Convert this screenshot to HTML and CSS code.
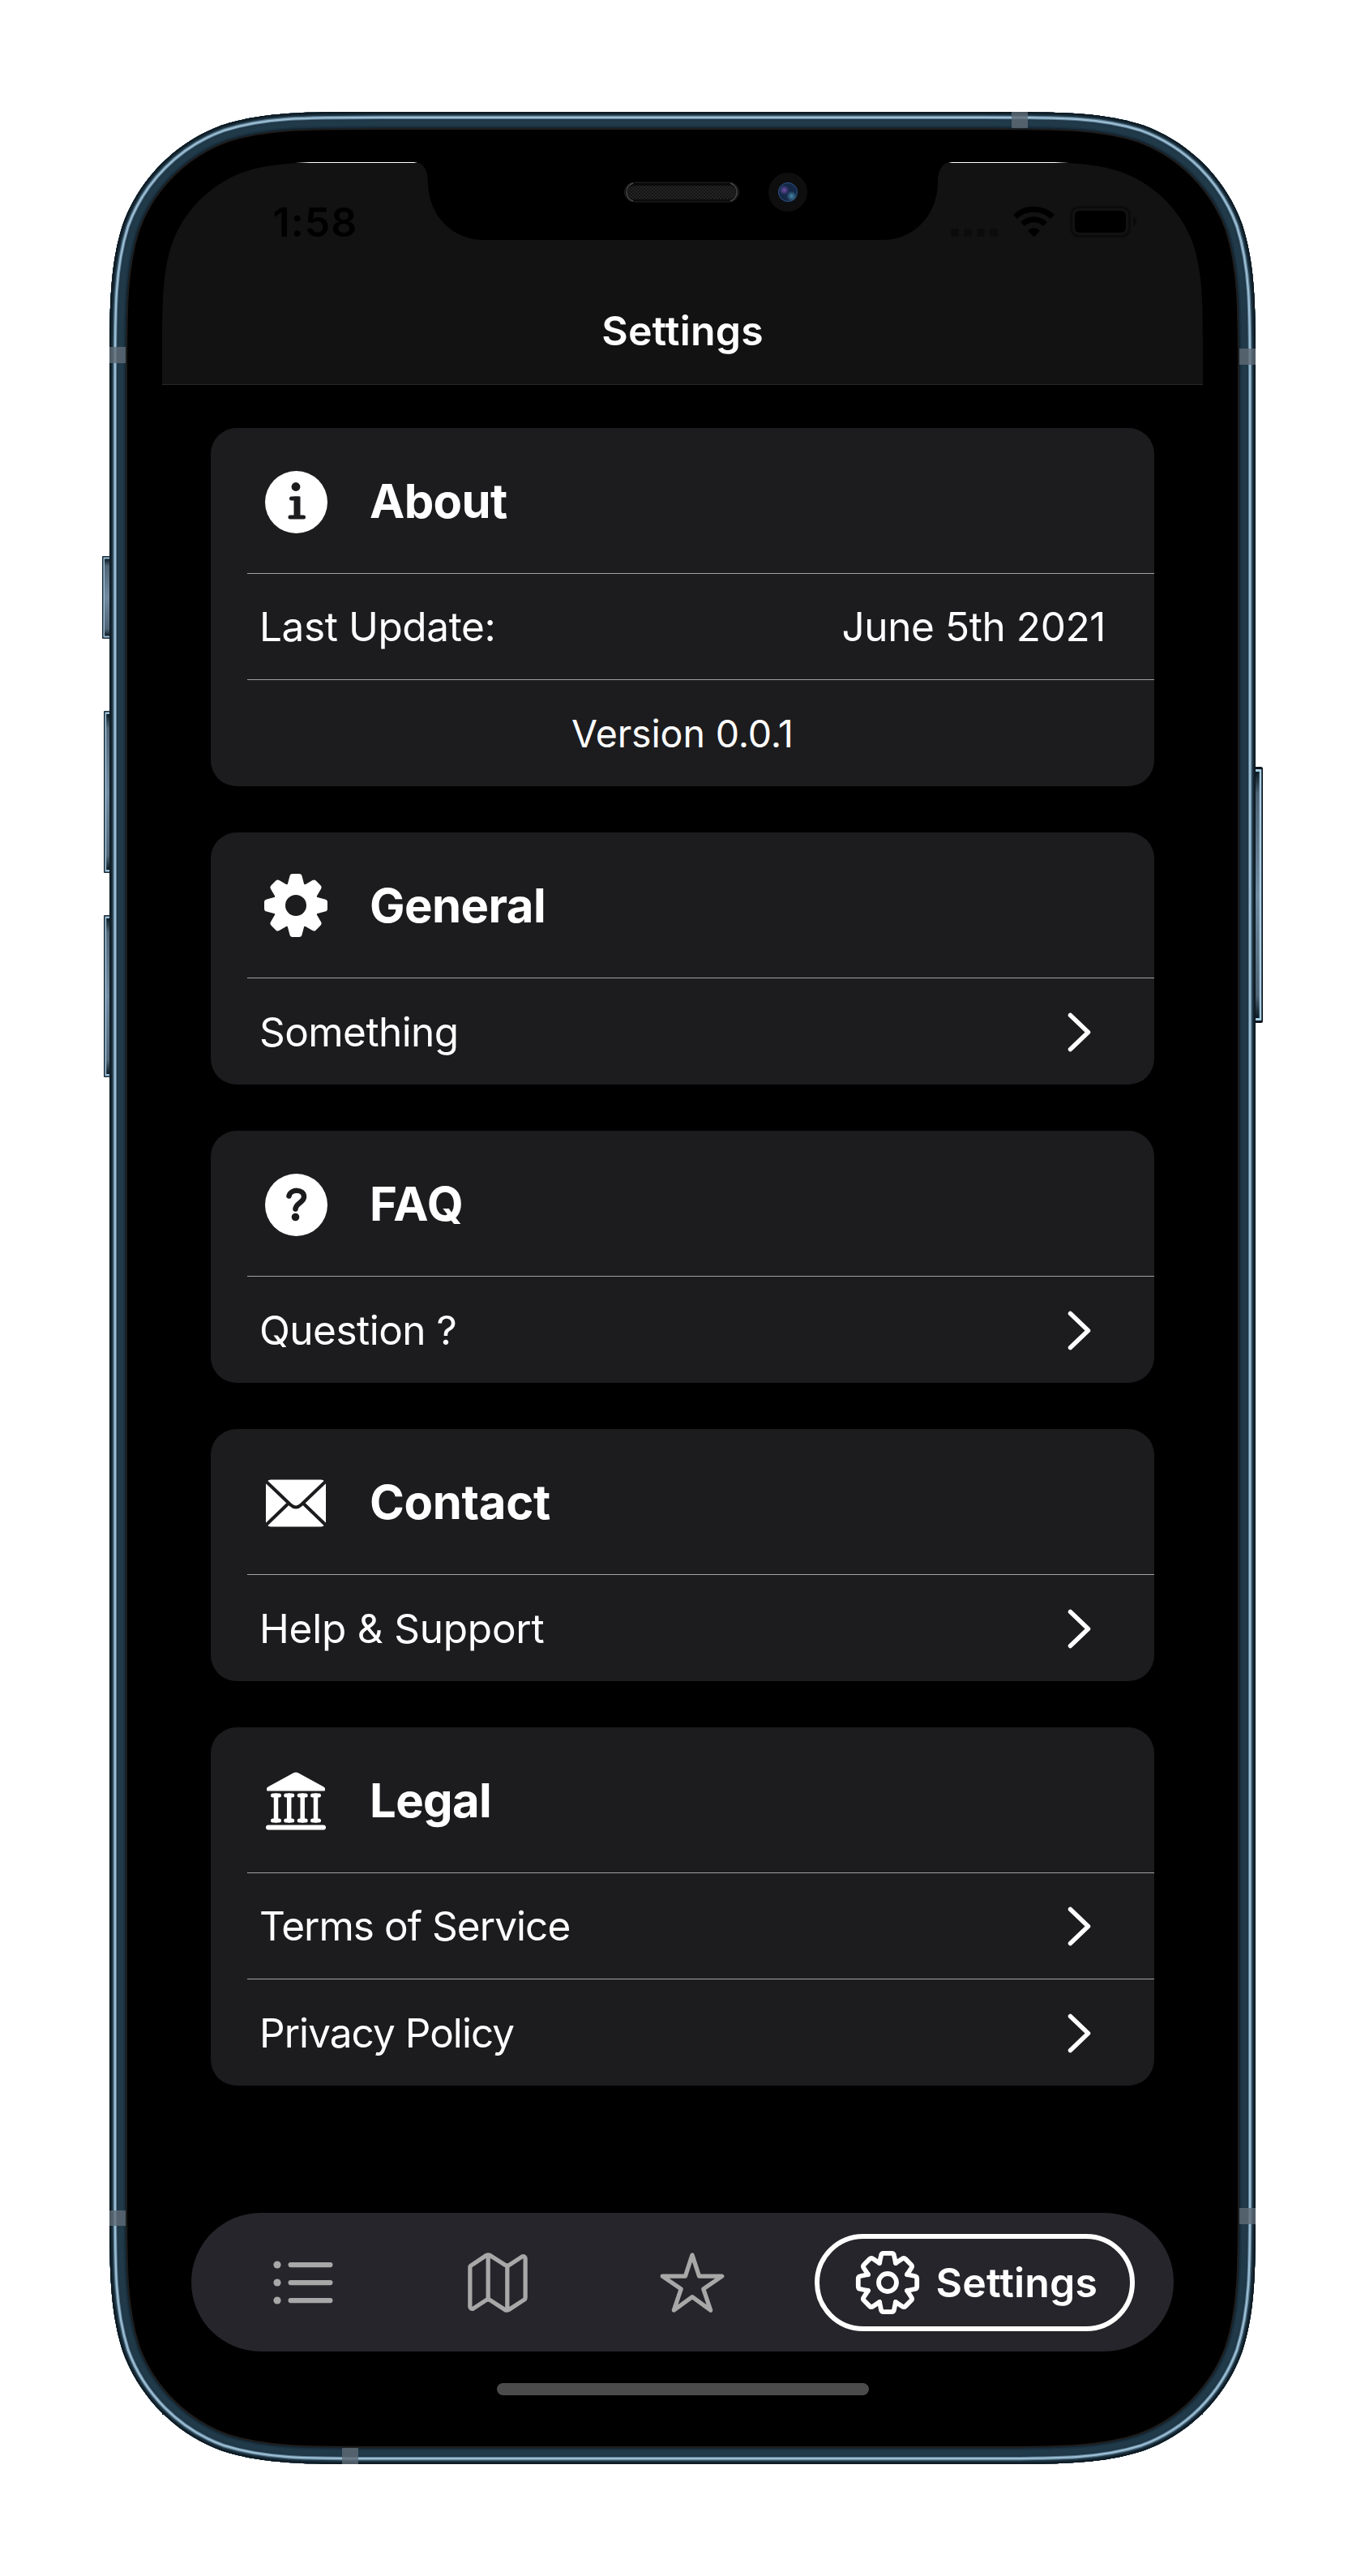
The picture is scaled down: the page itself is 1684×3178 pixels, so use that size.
FILE: index.html
```html
<!DOCTYPE html>
<html lang="en">
<head>
<meta charset="utf-8">
<title>Settings</title>
<link rel="stylesheet" href="styles.css">
</head>
<body>
<div class="stage">
  <svg class="device" viewBox="0 0 1684 3178" aria-hidden="true">
    <defs>
      <path id="body" d="M471.3 138H1212.7C1309.5 138 1358 138 1410.1 154.5C1467 175.2 1511.8 220 1532.5 276.9C1549 329 1549 377.5 1549 474.3V2703.7C1549 2800.5 1549 2849 1532.5 2901.1C1511.8 2958 1467 3002.8 1410.1 3023.5C1358 3040 1309.5 3040 1212.7 3040H471.3C374.5 3040 326 3040 273.9 3023.5C217 3002.8 172.2 2958 151.5 2901.1C135 2849 135 2800.5 135 2703.7V474.3C135 377.5 135 329 151.5 276.9C172.2 220 217 175.2 273.9 154.5C326 138 374.5 138 471.3 138Z"/>
      <clipPath id="bodyClip"><use href="#body"/></clipPath>
      <linearGradient id="key" x1="0" y1="0" x2="0" y2="1">
        <stop offset="0" stop-color="#0b1a22"/><stop offset=".09" stop-color="#4f6475"/>
        <stop offset=".5" stop-color="#708aa0"/><stop offset=".91" stop-color="#4f6475"/>
        <stop offset="1" stop-color="#0b1a22"/>
      </linearGradient>
      <linearGradient id="fadeL"><stop offset="0" stop-color="#fff" stop-opacity="0"/><stop offset=".12" stop-color="#fff"/><stop offset=".97" stop-color="#fff"/><stop offset="1" stop-color="#fff" stop-opacity="0"/></linearGradient>
      <linearGradient id="fadeR"><stop offset="0" stop-color="#fff" stop-opacity="0"/><stop offset=".03" stop-color="#fff"/><stop offset=".88" stop-color="#fff"/><stop offset="1" stop-color="#fff" stop-opacity="0"/></linearGradient>
      <pattern id="mesh" width="4" height="4" patternUnits="userSpaceOnUse"><rect width="4" height="4" fill="#141414"/><rect width="2" height="2" fill="#242424"/><rect x="2" y="2" width="2" height="2" fill="#242424"/></pattern>
      <radialGradient id="lensPurple"><stop offset="0" stop-color="#6f4fa6"/><stop offset="1" stop-color="#6f4fa6" stop-opacity="0"/></radialGradient>
      <radialGradient id="lensBlue"><stop offset="0" stop-color="#4689a6"/><stop offset="1" stop-color="#4689a6" stop-opacity="0"/></radialGradient>
    </defs>
    <!-- side keys -->
    <g>
      <rect x="126" y="686" width="14" height="102" rx="1" fill="#1b2d38"/><rect x="127.5" y="687.5" width="12" height="99" fill="#9cc0d8"/><rect x="129" y="689.5" width="10" height="95" fill="url(#key)"/>
      <rect x="128" y="877" width="12" height="200" rx="1" fill="#1b2d38"/><rect x="129.5" y="878.500" width="10" height="197" fill="#9cc0d8"/><rect x="131.200" y="881" width="9" height="192" fill="url(#key)"/>
      <rect x="128" y="1129" width="12" height="200" rx="1" fill="#1b2d38"/><rect x="129.500" y="1130.500" width="10" height="197" fill="#9cc0d8"/><rect x="131.200" y="1133" width="9" height="192" fill="url(#key)"/>
      <rect x="1540" y="946" width="18" height="316" rx="2.500" fill="#0e161c"/><rect x="1540" y="949" width="16.300" height="310" fill="#a8cfe6"/><rect x="1540" y="952" width="13.700" height="304" fill="url(#key)"/>
    </g>
    <path d="M200 2900h1284v79H200z"/>
    <!-- metal band, from the outside edge inwards -->
    <use href="#body"/>
    <g clip-path="url(#bodyClip)" fill="none">
      <use href="#body" stroke="#211d1b" stroke-width="44"/>
      <use href="#body" stroke="#14242f" stroke-width="41"/>
      <use href="#body" stroke="#1b3241" stroke-width="38"/>
      <use href="#body" stroke="#213a4a" stroke-width="34"/>
      <use href="#body" stroke="#1f3747" stroke-width="22"/>
      <use href="#body" stroke="#5f7f94" stroke-width="18"/>
      <use href="#body" stroke="#9bbdd3" stroke-width="16"/>
      <use href="#body" stroke="#5a7a8f" stroke-width="11.500"/>
      <use href="#body" stroke="#1f3644" stroke-width="9"/>
      <use href="#body" stroke="#152733" stroke-width="6"/>
      <use href="#body" stroke="#0d1921" stroke-width="3"/>
    </g>
    <g fill="#5f6b75" fill-opacity=".8">
      <path d="M135 428h20v20h-20zM1248 138h20v20h-20zM1529 430h20v20h-20zM135 2727h20v19h-20zM1529 2724h20v20h-20zM422 3020h20v20h-20z"/>
    </g>
    <!-- header surface around the notch -->
    <path fill="#121212" d="M200 475V444.6C200 374.2 200 338.9 212 301C227 259.7 259.7 227 301 212C338.900 200 374.200 200 444.600 200H512C524 201 528 212 528 225C528 265 558 296 596 296H1090C1127 296 1157 265 1157 225C1157 212 1161 201 1173 200H1239.400C1309.800 200 1345.100 200 1383 212C1424.300 227 1457 259.700 1472 301C1484 338.900 1484 374.200 1484 444.600V475Z"/>
    <path fill="url(#fadeL)" d="M364 200h151v1H364z"/>
    <path fill="url(#fadeR)" d="M1170 200h149v1H1170z"/>
    <!-- speaker and camera -->
    <rect x="770.500" y="225" width="141" height="24" rx="12" fill="#0a0a0a" stroke="#222"/>
    <path d="M781 226a11.500 11.500 0 0 0 0 22M901 226a11.500 11.500 0 0 1 0 22" fill="none" stroke="#4a4a4a" stroke-width="1.500"/>
    <rect x="774" y="229" width="134" height="17" rx="8.500" fill="url(#mesh)"/>
    <circle cx="972" cy="237" r="24" fill="#0e0e0f"/>
    <circle cx="972" cy="237" r="12" fill="#152848"/>
    <circle cx="972" cy="237" r="11.500" fill="none" stroke="#2b4f7c"/>
    <circle cx="967.500" cy="234.500" r="6" fill="url(#lensPurple)"/>
    <circle cx="976.500" cy="242" r="6.500" fill="url(#lensBlue)"/>
  </svg>

  <div class="screen">
    <header class="header">
      <div class="status">
        <span class="time">1:58</span>
        <svg class="status-icons" viewBox="1172 250 232 48" aria-hidden="true">
          <g fill="#0c0c0c"><rect x="1173" y="282" width="10" height="10" rx="3"/><rect x="1189" y="282" width="10" height="10" rx="3"/><rect x="1205" y="282" width="10" height="10" rx="3"/><rect x="1221" y="282" width="10" height="10" rx="3"/></g>
          <g fill="none" stroke="#000" stroke-width="7"><path d="M1252.500 267.500a33 33 0 0 1 46 0"/><path d="M1261.500 276.500a20 20 0 0 1 28 0"/></g>
          <path d="M1268 284.500q7.500-6.500 15 0l-7.500 8z"/>
          <rect x="1321.500" y="255.500" width="72" height="36" rx="10" fill="none" stroke="#0b0b0b" stroke-width="3"/>
          <rect x="1326" y="260" width="63" height="27" rx="6"/>
          <path d="M1398 267q4 2 4 6t-4 6z" fill="#0b0b0b"/>
        </svg>
      </div>
      <h1 class="title">Settings</h1>
    </header>

    <main class="cards">
      <section class="card">
        <div class="card-head">
          <svg class="icon" viewBox="0 0 90 90"><circle cx="45.500" cy="46.500" r="38.500" fill="#fff"/><circle cx="45" cy="27.500" r="5.400" fill="#1c1c1e"/><path d="M39.500 42H46.500V65M38 65H54.500" fill="none" stroke="#1c1c1e" stroke-width="5" stroke-linecap="round"/><path d="M46.500 39.500V65" stroke="#1c1c1e" stroke-width="8"/></svg>
          <h2>About</h2>
        </div>
        <div class="row"><span class="t-update">Last Update:</span><span class="t-date">June 5th 2021</span></div>
        <div class="row centered"><span>Version 0.0.1</span></div>
      </section>

      <section class="card">
        <div class="card-head">
          <svg class="icon" viewBox="-45 -45 90 90">
            <defs><path id="tooth" d="M-10.500-25L-7.600-36Q-7-39-4-39H4Q7-39 7.600-36L10.500-25Z"/></defs>
            <g fill="#fff"><use href="#tooth"/><use href="#tooth" transform="rotate(45)"/><use href="#tooth" transform="rotate(90)"/><use href="#tooth" transform="rotate(135)"/><use href="#tooth" transform="rotate(180)"/><use href="#tooth" transform="rotate(225)"/><use href="#tooth" transform="rotate(270)"/><use href="#tooth" transform="rotate(315)"/></g>
            <circle r="20.500" fill="none" stroke="#fff" stroke-width="15"/>
          </svg>
          <h2 class="t-general">General</h2>
        </div>
        <div class="row"><span class="t-some">Something</span><svg class="chev" viewBox="0 0 66 60"><path d="M22.500 9.500L44.500 30.500L22.500 51.500"/></svg></div>
      </section>

      <section class="card">
        <div class="card-head">
          <svg class="icon" viewBox="0 0 90 90"><circle cx="45.500" cy="46.500" r="38.500" fill="#fff"/><path d="M36.500 35.500C38.500 26.500 55 26.500 55 36.500C55 43.500 45 44 44.500 51.500" fill="none" stroke="#1c1c1e" stroke-width="6.500" stroke-linecap="round"/><circle cx="44.500" cy="61.500" r="4.800" fill="#1c1c1e"/></svg>
          <h2 class="t-faq">FAQ</h2>
        </div>
        <div class="row"><span class="t-question">Question ?</span><svg class="chev" viewBox="0 0 66 60"><path d="M22.500 9.500L44.500 30.500L22.500 51.500"/></svg></div>
      </section>

      <section class="card">
        <div class="card-head">
          <svg class="icon" viewBox="0 0 90 90"><rect x="8" y="17.500" width="74" height="58" rx="6" fill="#fff"/><path d="M6 17.500L38.500 48.500Q45 54.500 51.500 48.500L84 17.500M6 75.500L35 47.500M84 75.500L55 47.500" fill="none" stroke="#1c1c1e" stroke-width="4"/></svg>
          <h2 class="t-contact">Contact</h2>
        </div>
        <div class="row"><span class="t-help">Help &amp; Support</span><svg class="chev" viewBox="0 0 66 60"><path d="M22.500 9.500L44.500 30.500L22.500 51.500"/></svg></div>
      </section>

      <section class="card">
        <div class="card-head">
          <svg class="icon" viewBox="0 0 90 90">
            <g fill="#fff"><path d="M42 11.300Q45 9.500 48 11.300L79.500 28.500Q82 30.500 80.500 33.500H9.500Q8 30.500 10.500 28.500Z"/><rect x="8" y="75.500" width="74" height="6" rx="3"/></g>
            <g fill="none" stroke="#fff" stroke-linecap="round"><path stroke-width="5" d="M16.500 39h8M32.700 39h8M49.200 39h8M65.500 39h8M16.500 70h8M32.700 70h8M49.200 70h8M65.500 70h8"/><path stroke-width="5.500" d="M20.500 39v31M36.700 39v31M53.200 39v31M69.500 39v31"/></g>
          </svg>
          <h2>Legal</h2>
        </div>
        <div class="row"><span class="t-terms">Terms of Service</span><svg class="chev" viewBox="0 0 66 60"><path d="M22.500 9.500L44.500 30.500L22.500 51.500"/></svg></div>
        <div class="row"><span class="t-terms">Privacy Policy</span><svg class="chev" viewBox="0 0 66 60"><path d="M22.500 9.500L44.500 30.500L22.500 51.500"/></svg></div>
      </section>
    </main>

    <nav class="tabs">
      <a class="tab"><svg viewBox="0 0 84 84"><g fill="#a8a8a8"><circle cx="10" cy="20" r="4.600"/><circle cx="10" cy="42" r="4.600"/><circle cx="10" cy="64" r="4.600"/><rect x="23.500" y="17" width="55" height="6.200" rx="3.100"/><rect x="23.500" y="39" width="55" height="6.200" rx="3.100"/><rect x="23.500" y="61" width="55" height="6.200" rx="3.100"/></g></svg></a>
      <a class="tab"><svg viewBox="0 0 512 512"><path class="line" d="M313.270 124.640L198.730 51.360a32 32 0 0 0-29.280.350L56.510 127.490A16 16 0 0 0 48 141.630v295.800a16 16 0 0 0 23.490 14.140l97.820-63.790a32 32 0 0 1 29.500-.240l111.860 73a32 32 0 0 0 29.270-.110l115.430-75.940a16 16 0 0 0 8.630-14.200V74.570a16 16 0 0 0-23.490-14.140l-98 63.860a32 32 0 0 1-29.240.350zM328 128v335.400M184 48v338"/></svg></a>
      <a class="tab"><svg viewBox="0 0 512 512"><path class="line" d="M480 208H308L256 48l-52 160H32l140 96-54 160 138-100 138 100-54-160z"/></svg></a>
      <div class="tab-active">
        <a class="pill">
          <svg viewBox="-42 -42 84 84"><g class="gear"><path id="outline" d="M-10-24L-8-33.500Q-7.500-36.200-5-36.200H5Q7.500-36.200 8-33.500L10-24"/><use href="#outline" transform="rotate(45)"/><use href="#outline" transform="rotate(90)"/><use href="#outline" transform="rotate(135)"/><use href="#outline" transform="rotate(180)"/><use href="#outline" transform="rotate(225)"/><use href="#outline" transform="rotate(270)"/><use href="#outline" transform="rotate(315)"/><circle r="11"/></g></svg>
          <span>Settings</span>
        </a>
      </div>
    </nav>
    <div class="home-indicator"></div>
  </div>
</div>
</body>
</html>
```
FILE: styles.css
```css
* { box-sizing: border-box; }

body {
  margin: 0;
  background: #fff;
  color: #fff;
  font-family: Inter, "Liberation Sans", sans-serif;
}

.stage {
  position: relative;
  width: 1684px;
  height: 3178px;
  padding: 200px;
  overflow: hidden;
}

/* The handset artwork lies beneath the app screen. */
.device {
  position: absolute;
  inset: 0;
  width: 1684px;
  height: 3178px;
}

.screen {
  position: relative;
  width: 1284px;
  height: 2778px;
  display: flex;
  flex-direction: column;
}

.header {
  height: 275px;
  border-bottom: 1px solid #282828;
}

.status {
  height: 148px;
  padding: 0 80px 0 136.5px;
  display: flex;
  align-items: center;
  justify-content: space-between;
}

.time {
  color: #000;
  font-size: 50px;
  font-weight: 600;
  letter-spacing: 1.1px;
}

.status-icons {
  width: 232px;
  height: 48px;
}

.title {
  height: 120px;
  margin: 0;
  font-size: 50px;
  font-weight: 600;
  line-height: 120px;
  letter-spacing: .17px;
  text-align: center;
}

.cards {
  display: flex;
  flex-direction: column;
  gap: 57px;
  padding: 53px 60px 0;
}

.card {
  border-radius: 32px;
  background: #1c1c1e;
}

.card-head {
  height: 179px;
  padding-left: 60px;
  display: flex;
  align-items: center;
  gap: 46px;
}

.card-head h2 {
  margin: 0;
  font-size: 58px;
  font-weight: 700;
  letter-spacing: -.64px;
}

.card-head .t-general { letter-spacing: -.54px; }
.card-head .t-faq { letter-spacing: .6px; }
.card-head .t-contact { letter-spacing: -.32px; }

.icon {
  width: 90px;
  height: 90px;
}

.row {
  height: 131px;
  margin-left: 45px;
  padding: 0 60px 0 15px;
  border-top: 1px solid #a2a2a4;
  display: flex;
  align-items: center;
  justify-content: space-between;
  font-size: 49.5px;
}

.row:last-child { height: 132px; }

.row.centered {
  justify-content: center;
  padding: 0 45px 0 0;
  font-size: 46.5px;
  letter-spacing: -.12px;
}

.t-update, .t-date { letter-spacing: -.4px; }
.t-some { letter-spacing: -.57px; }
.t-question { letter-spacing: -.52px; }
.t-help { letter-spacing: -.22px; }
.t-terms { letter-spacing: -.96px; }

.chev {
  width: 66px;
  height: 60px;
  fill: none;
  stroke: #fff;
  stroke-width: 5.5px;
  stroke-linecap: round;
  stroke-linejoin: round;
}

.tabs {
  height: 171px;
  margin: 157px 36px 0;
  padding: 0 18px;
  display: flex;
  align-items: center;
  border-radius: 86px;
  background: #25252b;
}

.tab {
  width: 240px;
  display: flex;
  justify-content: center;
}

.tab svg {
  width: 84px;
  height: 84px;
}

.line {
  fill: none;
  stroke: #a8a8a8;
  stroke-width: 32px;
  stroke-linejoin: round;
}

.tab-active {
  flex: 1;
  display: flex;
  justify-content: center;
}

.pill {
  width: 395px;
  height: 120px;
  padding-left: 42px;
  border: 6px solid #fff;
  border-radius: 60px;
  display: flex;
  align-items: center;
  gap: 18px;
  font-size: 50px;
  font-weight: 600;
  letter-spacing: .17px;
}

.pill svg {
  flex: none;
  width: 84px;
  height: 84px;
}

.gear {
  fill: none;
  stroke: #fff;
  stroke-width: 5.8px;
  stroke-linejoin: round;
  stroke-linecap: round;
}

.home-indicator {
  width: 459px;
  height: 15px;
  margin: 39px auto 0;
  border-radius: 8px;
  background: #4b4b4b;
}
```
